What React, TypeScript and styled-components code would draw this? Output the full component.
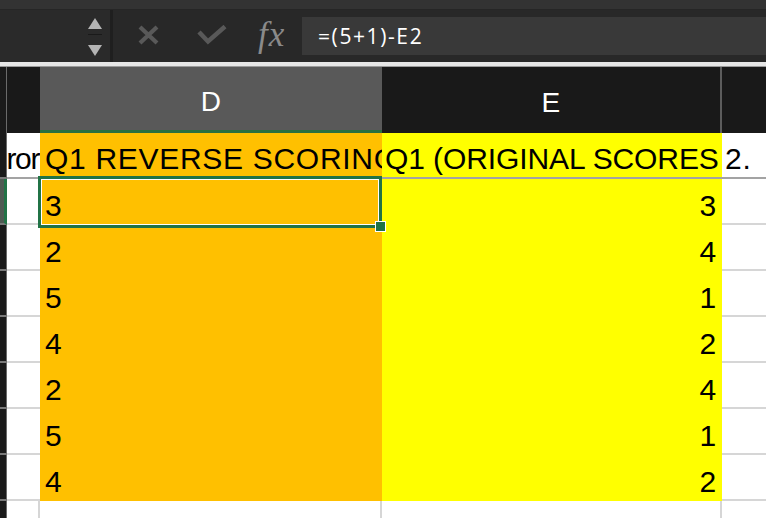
import React from 'react';
import styled, { createGlobalStyle } from 'styled-components';

const GlobalStyle = createGlobalStyle`
  html, body {
    margin: 0;
    padding: 0;
    background: #ffffff;
    overflow: hidden;
  }
  * {
    box-sizing: border-box;
  }
`;

type Fill = 'white' | 'orange' | 'yellow';

const fills: Record<Fill, string> = {
  white: '#ffffff',
  orange: '#ffc000',
  yellow: '#ffff00',
};

// Filas de datos: columna D (invertida) y columna E (original)
const rows: Array<[number, number]> = [
  [3, 3],
  [2, 4],
  [5, 1],
  [4, 2],
  [2, 4],
  [5, 1],
  [4, 2],
];

const App: React.FC = () => {
  return (
    <>
      <GlobalStyle />
      <Window>
        <TopStrip />
        <FormulaBar>
          <NameBox>
            <Stepper>
              <svg width="14" height="11" viewBox="0 0 14 11">
                <polygon points="7,0 14,11 0,11" fill="#b4b4b4" />
              </svg>
              <StepperGap />
              <svg width="14" height="11" viewBox="0 0 14 11">
                <polygon points="0,0 14,0 7,11" fill="#b4b4b4" />
              </svg>
            </Stepper>
          </NameBox>
          <BarDivider />
          <IconButton $width={70}>
            <svg width="21" height="20" viewBox="0 0 21 20">
              <path d="M2 2 L19 18 M19 2 L2 18" stroke="#595959" strokeWidth="4.2" />
            </svg>
          </IconButton>
          <IconButton $width={58}>
            <svg width="30" height="20" viewBox="0 0 30 20">
              <path d="M2 7 L11 16.5 L28 1.5" stroke="#595959" strokeWidth="4.5" fill="none" />
            </svg>
          </IconButton>
          <FxLabel>fx</FxLabel>
          <FormulaInput>=(5+1)-E2</FormulaInput>
        </FormulaBar>
        <Separator />
        <Sheet>
          <RowHead $header />
          <ColHead />
          <ColHead $selected>D</ColHead>
          <ColHead $divider>E</ColHead>
          <ColHead />

          <RowHead />
          <Cell $fill="white" $headerRow $align="right" $spacing={-1.4}>ror</Cell>
          <Cell $fill="orange" $headerRow>Q1 REVERSE SCORING</Cell>
          <Cell $fill="yellow" $headerRow $spacing={-0.1} $padLeft={3}>Q1 (ORIGINAL SCORES</Cell>
          <Cell $fill="white" $headerRow>2.</Cell>

          {rows.map(([d, e], i) => (
            <React.Fragment key={i}>
              <RowHead $selected={i === 0} />
              <Cell $fill="white" />
              <Cell $fill="orange">
                {d}
                {i === 0 && (
                  <SelectionFrame>
                    <FillHandle />
                  </SelectionFrame>
                )}
              </Cell>
              <Cell $fill="yellow" $align="right">{e}</Cell>
              <Cell $fill="white" />
            </React.Fragment>
          ))}

          <RowHead />
          <Cell $fill="white" $lineRight />
          <Cell $fill="white" $lineRight />
          <Cell $fill="white" $lineRight />
          <Cell $fill="white" />
        </Sheet>
      </Window>
    </>
  );
};

const Window = styled.div`
  width: 766px;
  height: 518px;
  overflow: hidden;
  display: flex;
  flex-direction: column;
  background: #ffffff;
`;

const TopStrip = styled.div`
  height: 10px;
  flex: none;
  background: #333333;
  border-bottom: 1px solid #262626;
`;

const FormulaBar = styled.div`
  height: 52px;
  flex: none;
  display: flex;
  align-items: center;
  background: #282828;
`;

const NameBox = styled.div`
  width: 110px;
  height: 100%;
  background: #2a2a2a;
  display: flex;
  justify-content: flex-end;
  align-items: center;
  padding-right: 8px;
`;

const Stepper = styled.div`
  display: flex;
  flex-direction: column;
  align-items: center;
  padding-top: 1px;
`;

const StepperGap = styled.div`
  width: 14px;
  height: 11px;
  border-top: 1px solid #1a1a1a;
  margin-top: 5px;
`;

const BarDivider = styled.div`
  width: 3px;
  height: 100%;
  background: #1f1f1f;
`;

const IconButton = styled.div<{ $width: number }>`
  width: ${({ $width }) => $width}px;
  height: 100%;
  display: flex;
  align-items: center;
  justify-content: center;
  padding-bottom: 3px;
`;

const FxLabel = styled.div`
  width: 61px;
  padding-left: 17px;
  font-family: 'Liberation Serif', 'DejaVu Serif', serif;
  font-style: italic;
  font-size: 35px;
  color: #8a8a8a;
  letter-spacing: 1px;
  line-height: 1;
  padding-bottom: 4px;
`;

const FormulaInput = styled.div`
  flex: 1;
  height: 38px;
  background: #393939;
  display: flex;
  align-items: center;
  padding-left: 16px;
  font-family: 'Open Sans', 'Liberation Sans', sans-serif;
  font-size: 21px;
  letter-spacing: 1.6px;
  color: #ffffff;
`;

const Separator = styled.div`
  height: 5px;
  flex: none;
  background: #e6e6e6;
  border-bottom: 1px solid #9a9a9a;
`;

const Sheet = styled.div`
  display: grid;
  grid-template-columns: 7px 33px 342px 340px 44px;
  grid-template-rows: 66px repeat(7, 46px) 46px 46px;
  font-family: 'Liberation Sans', Arial, sans-serif;
`;

const RowHead = styled.div<{ $header?: boolean; $selected?: boolean }>`
  background: ${({ $selected }) => ($selected ? '#4f5a53' : '#1a1a1a')};
  border-right: 1px solid #6a6a6a;
  border-bottom: ${({ $header }) => ($header ? 'none' : '2px solid #7a7a7a')};
  ${({ $selected }) => ($selected ? 'border-right: 3px solid #217346;' : '')}
`;

const ColHead = styled.div<{ $selected?: boolean; $divider?: boolean }>`
  background: ${({ $selected }) => ($selected ? '#595959' : '#191919')};
  color: #ffffff;
  font-size: 28px;
  letter-spacing: 0.5px;
  display: flex;
  align-items: center;
  justify-content: center;
  padding-top: 6px;
  border-bottom: ${({ $selected }) => ($selected ? '3px solid #2a7040' : 'none')};
  border-right: ${({ $divider }) => ($divider ? '2px solid #5c5c5c' : 'none')};
`;

const Cell = styled.div<{
  $fill: Fill;
  $align?: 'left' | 'right';
  $headerRow?: boolean;
  $spacing?: number;
  $padLeft?: number;
  $lineRight?: boolean;
}>`
  position: relative;
  background: ${({ $fill }) => fills[$fill]};
  color: #000000;
  font-size: 30px;
  letter-spacing: ${({ $spacing }) => ($spacing ?? 0.7)}px;
  white-space: nowrap;
  display: flex;
  align-items: center;
  justify-content: ${({ $align }) => ($align === 'right' ? 'flex-end' : 'flex-start')};
  padding: 8px 5px 0 ${({ $padLeft }) => ($padLeft ?? 5)}px;
  ${({ $fill }) => ($fill === 'white' ? 'padding-left: 3px; padding-right: 1px;' : '')}
  overflow: ${({ $fill }) => ($fill === 'orange' ? 'visible' : 'hidden')};
  border-bottom: ${({ $fill, $headerRow }) =>
    $headerRow ? '2px solid #a3a3a3' : $fill === 'white' ? '2px solid #d6d6d6' : 'none'};
  border-right: ${({ $lineRight }) => ($lineRight ? '2px solid #d6d6d6' : 'none')};
`;

const SelectionFrame = styled.div`
  position: absolute;
  z-index: 3;
  left: -2px;
  top: -3px;
  right: 0;
  bottom: -3px;
  border: 3px solid #217346;
  box-shadow: inset 0 0 0 1px #ffffff;
  pointer-events: none;
`;

const FillHandle = styled.div`
  position: absolute;
  right: -7px;
  bottom: -7px;
  width: 11px;
  height: 11px;
  background: #217346;
  border: 1px solid #ffffff;
`;

export default App;
